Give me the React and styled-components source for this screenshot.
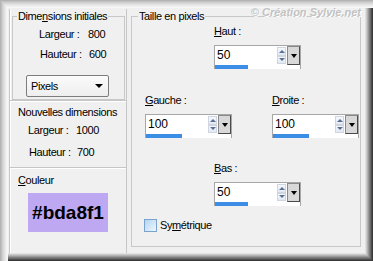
import React from 'react';
import styled, { createGlobalStyle } from 'styled-components';

const Global = createGlobalStyle`
  html, body { margin: 0; padding: 0; background: #f0f0f0; }
  body { font-family: "Liberation Sans", Arial, sans-serif; }
  * { box-sizing: border-box; }
`;

const Frame = styled.div`
  position: relative;
  width: 373px;
  height: 261px;
  background: #f0f0f0;
  padding: 9px 8px 8px 9px;
  display: flex;
  font-size: 11px;
  letter-spacing: -0.4px;
  color: #000;
  box-shadow:
    inset 1px 1px 0 #b4b4b4,
    inset 2px 2px 0 #c2c2c2,
    inset 3px 3px 0 #cecece,
    inset 4px 4px 0 #d9d9d9,
    inset 5px 5px 0 #e2e2e2,
    inset 6px 6px 0 #eaeaea,
    inset 7px 7px 0 #f2f2f2,
    inset 8px 8px 0 #f7f7f7,
    inset -1px -1px 0 #383838,
    inset -2px -2px 0 #505050,
    inset -3px -3px 0 #686868,
    inset -4px -4px 0 #808080,
    inset -5px -5px 0 #999999,
    inset -6px -6px 0 #b3b3b3,
    inset -7px -7px 0 #cbcbcb,
    inset -8px -8px 0 #e0e0e0;
`;

const Watermark = styled.div`
  position: absolute;
  top: 6px;
  right: 12px;
  font-size: 11px;
  line-height: 12px;
  font-weight: bold;
  font-style: italic;
  letter-spacing: 0;
  color: #c2c2c2;
  text-shadow: 1px 1px 0 #ffffff;
`;

const LeftColumn = styled.div`
  width: 118px;
  display: flex;
  flex-direction: column;
  border-left: 1px solid #c6c6c6;
  border-right: 1px solid #c6c6c6;
  box-shadow: inset 1px 0 0 #ffffff;
`;

const GroupBox = styled.fieldset`
  margin: ${p => p.$margin || '0'};
  padding: ${p => p.$padding || '0'};
  width: ${p => p.$width};
  height: ${p => p.$height};
  border: 1px solid #c8c8c8;
  min-width: 0;
`;

const Legend = styled.legend`
  margin-left: ${p => p.$offset || 4}px;
  padding: 0 1px;
  line-height: 12px;
  font-size: 11px;
`;

const Section = styled.div`
  border-top: ${p => (p.$line ? '1px solid #c6c6c6' : 'none')};
  box-shadow: ${p => (p.$line ? 'inset 0 1px 0 #ffffff' : 'none')};
  padding: ${p => p.$padding};
  height: ${p => p.$height};
  display: flex;
  flex-direction: column;
`;

const SectionTitle = styled.div`
  line-height: 13px;
`;

const InfoRow = styled.div`
  display: grid;
  grid-template-columns: ${p => p.$labelWidth}px auto;
  line-height: 13px;
  padding-left: ${p => p.$indent}px;
  margin-top: ${p => p.$top}px;
`;

const U = styled.span`
  text-decoration: underline;
  text-underline-offset: 1px;
`;

const SelectBox = styled.div`
  margin: 14px 0 0 13px;
  width: 83px;
  height: 22px;
  border: 1px solid #7c7c7c;
  border-radius: 2px;
  background: linear-gradient(#fbfbfb, #eeeeee);
  display: flex;
  align-items: center;
  justify-content: space-between;
  padding: 0 5px 0 4px;
  font-size: 11px;
`;

const Caret = styled.span`
  width: 0;
  height: 0;
  border-left: 4px solid transparent;
  border-right: 4px solid transparent;
  border-top: 4px solid #000;
`;

const Swatch = styled.div`
  margin: 6px 0 0 10px;
  width: 80px;
  height: 39px;
  background: #bda8f1;
  display: flex;
  align-items: center;
  justify-content: center;
  font-size: 19px;
  font-weight: bold;
  letter-spacing: 0;
`;

const Content = styled.div`
  display: flex;
  flex-direction: column;
  padding-top: 3px;
`;

const FieldRow = styled.div`
  display: flex;
  gap: 40px;
  padding-left: ${p => p.$indent}px;
  margin-top: ${p => p.$top}px;
`;

const Field = styled.div`
  display: flex;
  flex-direction: column;
`;

const FieldLabel = styled.div`
  line-height: 13px;
  margin-bottom: 7px;
`;

const Spinner = styled.div`
  width: 87px;
  height: 24px;
  border: 1px solid #a7a7a7;
  background: #fff;
  display: flex;
  flex-direction: column;
`;

const SpinTop = styled.div`
  display: flex;
  height: 19px;
`;

const SpinInput = styled.div`
  flex: 1;
  padding-left: 2px;
  font-size: 12px;
  letter-spacing: 0;
  line-height: 19px;
`;

const SpinArrows = styled.div`
  width: 10px;
  display: flex;
  flex-direction: column;
  padding: 1px 0;
`;

const SpinBtn = styled.div`
  flex: 1;
  margin: 0 1px 0 0;
  border: 1px solid #cfd6e2;
  background: linear-gradient(#f6f8fc, #e2e8f2);
  display: flex;
  align-items: center;
  justify-content: center;
  &::after {
    content: '';
    width: 0;
    height: 0;
    border-left: 3px solid transparent;
    border-right: 3px solid transparent;
    ${p => (p.$up ? 'border-bottom: 3px solid #5a6f98;' : 'border-top: 3px solid #5a6f98;')}
  }
`;

const DropBtn = styled.div`
  width: 13px;
  border: 1px solid #4a4a4a;
  border-top-color: #8a8a8a;
  border-left-color: #8a8a8a;
  background: #d8d8d8;
  display: flex;
  align-items: center;
  justify-content: center;
`;

const BlackCaret = styled.span`
  width: 0;
  height: 0;
  border-left: 3.5px solid transparent;
  border-right: 3.5px solid transparent;
  border-top: 4px solid #000;
`;

const Track = styled.div`
  height: 4px;
  background: #fff;
`;

const TrackFill = styled.div`
  height: 4px;
  background: #3c8de6;
`;

const CheckRow = styled.label`
  display: flex;
  align-items: center;
  gap: 3px;
  margin: 13px 0 0 12px;
  line-height: 13px;
`;

const CheckBox = styled.span`
  width: 13px;
  height: 13px;
  border: 1px solid #7aa2cf;
  background: linear-gradient(135deg, #b5d5f3, #eef6fd);
`;

function SpinField({ accent, rest, value, fill }) {
  return (
    <Field>
      <FieldLabel>
        <U>{accent}</U>
        {rest}
      </FieldLabel>
      <Spinner>
        <SpinTop>
          <SpinInput>{value}</SpinInput>
          <SpinArrows>
            <SpinBtn $up />
            <SpinBtn />
          </SpinArrows>
          <DropBtn>
            <BlackCaret />
          </DropBtn>
        </SpinTop>
        <Track>
          <TrackFill style={{ width: `${fill}px` }} />
        </Track>
      </Spinner>
    </Field>
  );
}

export default function App() {
  return (
    <>
      <Global />
      <Frame>
        <Watermark>© Création Sylvie.net</Watermark>
        <LeftColumn>
          <Section $height="91px" $padding="1px 0 0 2px">
            <GroupBox $width="113px" $height="90px" $padding="6px 0 0 0">
              <Legend $offset={4}>
                Dime<U>n</U>sions initiales
              </Legend>
              <InfoRow $labelWidth={49} $indent={26} $top={0}>
                <span>Largeur :</span>
                <span>800</span>
              </InfoRow>
              <InfoRow $labelWidth={49} $indent={27} $top={7}>
                <span>Hauteur :</span>
                <span>600</span>
              </InfoRow>
              <SelectBox>
                <span>Pixels</span>
                <Caret />
              </SelectBox>
            </GroupBox>
          </Section>
          <Section $line $height="67px" $padding="5px 0 0 8px">
            <SectionTitle>Nouvelles dimensions</SectionTitle>
            <InfoRow $labelWidth={48} $indent={10} $top={5}>
              <span>Largeur :</span>
              <span>1000</span>
            </InfoRow>
            <InfoRow $labelWidth={48} $indent={11} $top={9}>
              <span>Hauteur :</span>
              <span>700</span>
            </InfoRow>
          </Section>
          <Section $line $padding="6px 0 0 8px">
            <SectionTitle>
              <U>C</U>ouleur
            </SectionTitle>
            <Swatch>#bda8f1</Swatch>
          </Section>
        </LeftColumn>
        <GroupBox $margin="1px 0 0 4px" $width="230px" $height="237px">
          <Legend $offset={6}>Taille en pixels</Legend>
          <Content>
            <FieldRow $indent={82} $top={0}>
              <SpinField accent="H" rest="aut :" value="50" fill={33} />
            </FieldRow>
            <FieldRow $indent={13} $top={25}>
              <SpinField accent="G" rest="auche :" value="100" fill={36} />
              <SpinField accent="D" rest="roite :" value="100" fill={36} />
            </FieldRow>
            <FieldRow $indent={82} $top={24}>
              <SpinField accent="B" rest="as :" value="50" fill={33} />
            </FieldRow>
            <CheckRow>
              <CheckBox />
              <span>
                Sy<U>m</U>étrique
              </span>
            </CheckRow>
          </Content>
        </GroupBox>
      </Frame>
    </>
  );
}
